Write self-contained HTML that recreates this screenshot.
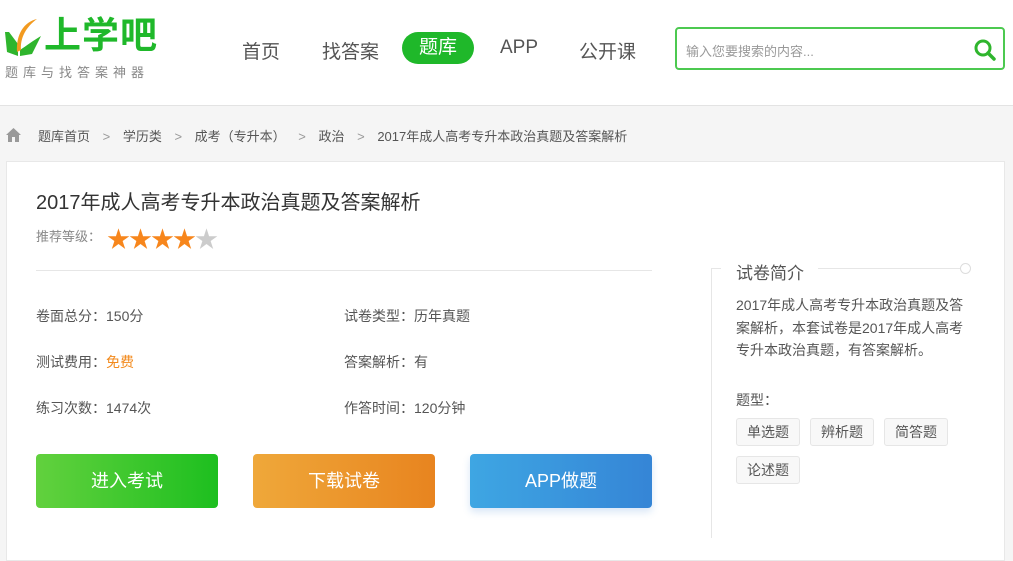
<!DOCTYPE html>
<html><head><meta charset="utf-8"><style>
*{margin:0;padding:0;box-sizing:border-box}
body{width:1013px;height:528px;overflow:hidden;background:#f5f5f5;font-family:"Liberation Sans","Noto Sans CJK SC",sans-serif;color:#555;position:relative}
.hd{position:absolute;left:0;top:0;width:1013px;height:106px;background:#fff;border-bottom:1px solid #e3e3e3}
.abs{position:absolute;white-space:nowrap}
.nav{font-size:19px;color:#555;top:37px}
.pill{left:402px;top:32px;width:72px;height:32px;border-radius:16px;background:#1fb82a;color:#fff;font-size:19px;text-align:center;line-height:32px}
.search{left:675px;top:27px;width:330px;height:43px;border:2px solid #4cc950;border-radius:4px;background:#fff}
.bc{top:126px;font-size:13px;color:#555}
.main{position:absolute;left:6px;top:161px;width:999px;height:400px;background:#fff;border:1px solid #e8e8e8}
.info{font-size:14px;color:#555}
.btn{position:absolute;top:454px;width:182px;height:54px;border-radius:4px;color:#fff;font-size:18px;text-align:center;line-height:54px}
.tag{position:absolute;height:28px;border:1px solid #e6e6e6;border-radius:3px;background:#f8f8f8;font-size:14px;color:#555;line-height:26px;text-align:center;width:64px}
</style></head><body>
<div class="hd"></div>
<svg class="abs" style="left:4px;top:18px" width="38" height="40" viewBox="0 0 38 40">
<path d="M1 14 L5 14 L14 26 L14 38 L3 34 Z" fill="#2fb52d"/>
<path d="M37 18 L28 36 L16 38 L16 32 C22 28 30 22 37 18 Z" fill="#2fb52d"/>
<path d="M33 1 C20 4 12 16 13 34 L17 32 C16 20 22 9 33 1 Z" fill="#f29a1f"/>
</svg>
<div class="abs" style="left:44px;top:14px;font-size:37px;font-weight:bold;color:#1fb82a;letter-spacing:1px;line-height:44px">上学吧</div>
<div class="abs" style="left:5px;top:62px;font-size:13px;color:#888;letter-spacing:5px">题库与找答案神器</div>
<div class="abs nav" style="left:242px">首页</div>
<div class="abs nav" style="left:322px">找答案</div>
<div class="abs pill">题库</div>
<div class="abs nav" style="left:500px">APP</div>
<div class="abs nav" style="left:579px">公开课</div>
<div class="abs search"><span class="abs" style="left:9px;top:12px;font-size:13px;color:#999">输入您要搜索的内容...</span>
<svg class="abs" style="left:296px;top:9px" width="24" height="24" viewBox="0 0 24 24"><circle cx="10" cy="10" r="7" stroke="#2fb52d" stroke-width="3" fill="none"/><path d="M15 15 L21 21" stroke="#2fb52d" stroke-width="3.5" stroke-linecap="round"/></svg></div>
<svg class="abs" style="left:5px;top:127px" width="17" height="16" viewBox="0 0 17 16"><path d="M8.5 1 L16 8 L14 8 L14 15 L10 15 L10 10 L7 10 L7 15 L3 15 L3 8 L1 8 Z" fill="#999"/></svg>
<div class="abs bc" style="left:38px">题库首页 <span style="color:#999;margin:0 9px">&gt;</span> 学历类 <span style="color:#999;margin:0 9px">&gt;</span> 成考（专升本） <span style="color:#999;margin:0 9px">&gt;</span> 政治 <span style="color:#999;margin:0 9px">&gt;</span> 2017年成人高考专升本政治真题及答案解析</div>
<div class="main"></div>
<div class="abs" style="left:36px;top:186px;font-size:20px;color:#333">2017年成人高考专升本政治真题及答案解析</div>
<div class="abs" style="left:36px;top:226px;font-size:13px;color:#888">推荐等级：</div>
<div class="abs" style="left:107px;top:220px;font-size:23px;letter-spacing:-1px;color:#f7861c">★★★★<span style="color:#ccc">★</span></div>
<div class="abs" style="left:36px;top:270px;width:616px;height:1px;background:#e6e6e6"></div>
<div class="abs info" style="left:36px;top:306px">卷面总分：150分</div>
<div class="abs info" style="left:344px;top:306px">试卷类型：历年真题</div>
<div class="abs info" style="left:36px;top:352px">测试费用：<span style="color:#f28a1d">免费</span></div>
<div class="abs info" style="left:344px;top:352px">答案解析：有</div>
<div class="abs info" style="left:36px;top:398px">练习次数：1474次</div>
<div class="abs info" style="left:344px;top:398px">作答时间：120分钟</div>
<div class="btn" style="left:36px;background:linear-gradient(90deg,#62d13e,#1dbf1f)">进入考试</div>
<div class="btn" style="left:253px;background:linear-gradient(90deg,#efa83a,#e8841f)">下载试卷</div>
<div class="btn" style="left:470px;background:linear-gradient(90deg,#3ea6e3,#3585d6);box-shadow:0 4px 8px rgba(60,130,210,.2)">APP做题</div>
<div class="abs" style="left:711px;top:268px;width:1px;height:270px;background:#e6e6e6"></div>
<div class="abs" style="left:711px;top:268px;width:10px;height:1px;background:#e6e6e6"></div>
<div class="abs" style="left:818px;top:268px;width:143px;height:1px;background:#e6e6e6"></div>
<div class="abs" style="left:960px;top:263px;width:11px;height:11px;border:1px solid #ddd;border-radius:50%;background:#fff"></div>
<div class="abs" style="left:736px;top:259px;font-size:17px;color:#555">试卷简介</div>
<div class="abs" style="left:736px;top:294px;font-size:14px;color:#555;line-height:22.5px;white-space:normal;width:232px">2017年成人高考专升本政治真题及答案解析，本套试卷是2017年成人高考专升本政治真题，有答案解析。</div>
<div class="abs" style="left:736px;top:390px;font-size:14px;color:#555">题型：</div>
<div class="tag" style="left:736px;top:418px">单选题</div>
<div class="tag" style="left:810px;top:418px">辨析题</div>
<div class="tag" style="left:884px;top:418px">简答题</div>
<div class="tag" style="left:736px;top:456px">论述题</div>
</body></html>
